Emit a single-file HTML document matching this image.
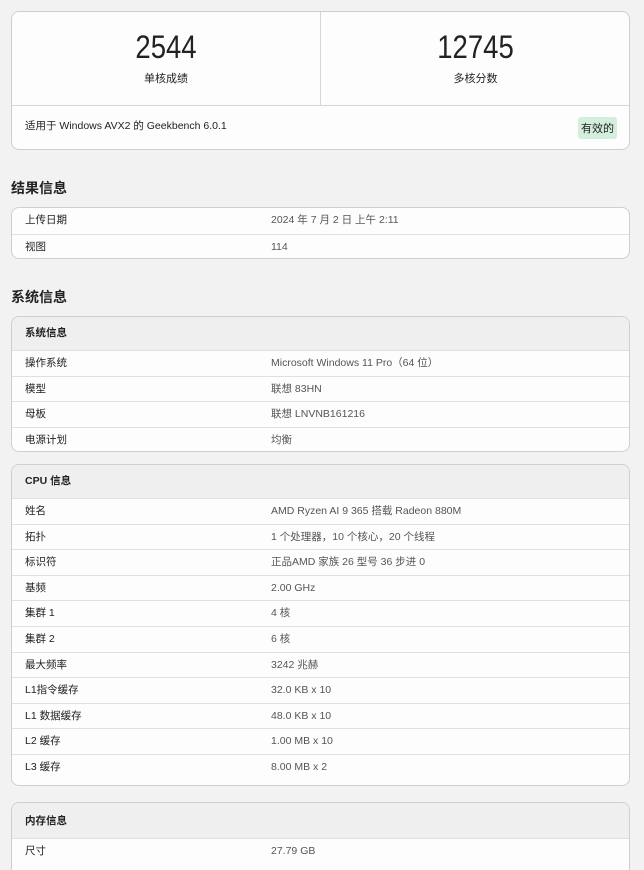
<!DOCTYPE html>
<html style="height:870px;overflow:hidden"><head><meta charset="utf-8"><style>
*{box-sizing:border-box;margin:0;padding:0}
body{width:644px;height:870px;overflow:hidden;background:#f2f2f2;font-family:"Liberation Sans","Noto Sans CJK SC",sans-serif;color:#222;font-size:10.5px;position:relative}
.card{position:absolute;left:11px;width:619px;background:#fdfdfd;border:1px solid #cfcfcf;border-radius:8px;overflow:hidden}
.top{top:11px;height:139px}
.half{position:absolute;top:0;height:93px;width:309px;text-align:center}
.half .n{font-size:32px;margin-top:17px;line-height:36px;color:#222;transform:scaleX(0.86)}
.half .l{font-size:11px;margin-top:5px}
.foot{position:absolute;top:93px;left:0;right:0;border-top:1px solid #d6d6d6;height:45px}
.foot .t{position:absolute;left:13px;top:12px}
.badge{position:absolute;right:12px;top:11px;background:#d3eedb;border-radius:3px;padding:3px 3px;font-size:11px}
h2{position:absolute;left:11px;font-size:14px;font-weight:bold;color:#222}
.row{height:25.6px;line-height:24px;border-top:1px solid #e0e0e0;position:relative;padding-left:13px}
.row:first-child{border-top:none}
.row .v{position:absolute;left:259px;top:0;color:#555}
.hd{height:33px;line-height:33px;background:#efefef;padding-left:13px;font-weight:bold}
</style></head><body>
<div class="card top">
<div class="half" style="left:0;border-right:1px solid #d6d6d6"><div class="n">2544</div><div class="l">单核成绩</div></div>
<div class="half" style="left:309px"><div class="n">12745</div><div class="l">多核分数</div></div>
<div class="foot"><div class="t">适用于 Windows AVX2 的 Geekbench 6.0.1</div><div class="badge">有效的</div></div>
</div>
<h2 style="top:178px">结果信息</h2>
<div class="card" style="top:207px;height:52px">
<div class="row">上传日期<span class="v">2024 年 7 月 2 日 上午 2:11</span></div>
<div class="row">视图<span class="v">114</span></div>
</div>
<h2 style="top:287px">系统信息</h2>
<div class="card" style="top:316px;height:136px">
<div class="hd">系统信息</div>
<div class="row">操作系统<span class="v">Microsoft Windows 11 Pro（64 位）</span></div>
<div class="row">模型<span class="v">联想 83HN</span></div>
<div class="row">母板<span class="v">联想 LNVNB161216</span></div>
<div class="row">电源计划<span class="v">均衡</span></div>
</div>
<div class="card" style="top:464px;height:322px">
<div class="hd">CPU 信息</div>
<div class="row">姓名<span class="v">AMD Ryzen AI 9 365 搭载 Radeon 880M</span></div>
<div class="row">拓扑<span class="v">1 个处理器，10 个核心，20 个线程</span></div>
<div class="row">标识符<span class="v">正品AMD 家族 26 型号 36 步进 0</span></div>
<div class="row">基频<span class="v">2.00 GHz</span></div>
<div class="row">集群 1<span class="v">4 核</span></div>
<div class="row">集群 2<span class="v">6 核</span></div>
<div class="row">最大频率<span class="v">3242 兆赫</span></div>
<div class="row">L1指令缓存<span class="v">32.0 KB x 10</span></div>
<div class="row">L1 数据缓存<span class="v">48.0 KB x 10</span></div>
<div class="row">L2 缓存<span class="v">1.00 MB x 10</span></div>
<div class="row">L3 缓存<span class="v">8.00 MB x 2</span></div>
</div>
<div class="card" style="top:802px;height:80px">
<div class="hd" style="height:35px;line-height:37px">内存信息</div>
<div class="row">尺寸<span class="v">27.79 GB</span></div>
</div>
</body></html>
